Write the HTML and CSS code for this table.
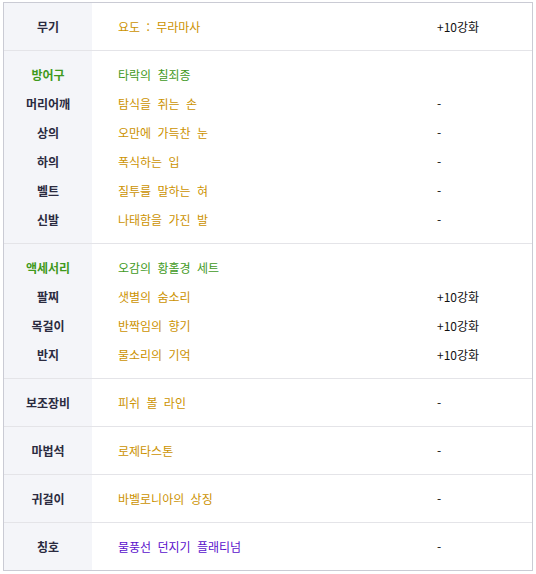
FILE: index.html
```html
<!DOCTYPE html>
<html lang="ko">
<head>
<meta charset="utf-8">
<link rel="stylesheet" href="styles.css">
</head>
<body>
<div class="equip">
  <div class="group">
    <div class="label"><div>무기</div></div>
    <div class="value"><div class="gold">요도 : 무라마사</div></div>
    <div class="extra"><div>+10강화</div></div>
  </div>
  <div class="group">
    <div class="label">
      <div class="green">방어구</div>
      <div>머리어깨</div>
      <div>상의</div>
      <div>하의</div>
      <div>벨트</div>
      <div>신발</div>
    </div>
    <div class="value">
      <div class="green">타락의 칠죄종</div>
      <div class="gold">탐식을 쥐는 손</div>
      <div class="gold">오만에 가득찬 눈</div>
      <div class="gold">폭식하는 입</div>
      <div class="gold">질투를 말하는 혀</div>
      <div class="gold">나태함을 가진 발</div>
    </div>
    <div class="extra">
      <div>&nbsp;</div>
      <div>-</div>
      <div>-</div>
      <div>-</div>
      <div>-</div>
      <div>-</div>
    </div>
  </div>
  <div class="group">
    <div class="label">
      <div class="green">액세서리</div>
      <div>팔찌</div>
      <div>목걸이</div>
      <div>반지</div>
    </div>
    <div class="value">
      <div class="green">오감의 황홀경 세트</div>
      <div class="gold">샛별의 숨소리</div>
      <div class="gold">반짝임의 향기</div>
      <div class="gold">물소리의 기억</div>
    </div>
    <div class="extra">
      <div>&nbsp;</div>
      <div>+10강화</div>
      <div>+10강화</div>
      <div>+10강화</div>
    </div>
  </div>
  <div class="group">
    <div class="label"><div>보조장비</div></div>
    <div class="value"><div class="gold">피쉬 볼 라인</div></div>
    <div class="extra"><div>-</div></div>
  </div>
  <div class="group">
    <div class="label"><div>마법석</div></div>
    <div class="value"><div class="gold">로제타스톤</div></div>
    <div class="extra"><div>-</div></div>
  </div>
  <div class="group">
    <div class="label"><div>귀걸이</div></div>
    <div class="value"><div class="gold">바벨로니아의 상징</div></div>
    <div class="extra"><div>-</div></div>
  </div>
  <div class="group">
    <div class="label"><div>칭호</div></div>
    <div class="value"><div class="purple">물풍선 던지기 플래티넘</div></div>
    <div class="extra"><div>-</div></div>
  </div>
</div>
</body>
</html>
```
FILE: styles.css
```css
html, body {
  margin: 0;
  padding: 0;
  background: #ffffff;
}
body {
  padding: 2px 3px 0 3px;
  font-family: "Noto Sans CJK KR", "Noto Sans", sans-serif;
  font-size: 12px;
  color: #111111;
}
.equip {
  width: 530px;
  box-sizing: border-box;
  border: 1px solid #cacbd4;
}
.group {
  display: grid;
  grid-template-columns: 88px 345px 1fr;
  border-top: 1px solid #e4e4e8;
}
.group:first-child {
  border-top: none;
}
.group > div {
  padding: 9px 0;
}
.group > div > div {
  height: 29px;
  line-height: 29px;
  white-space: nowrap;
  word-spacing: 3px;
}
.label {
  background: #f4f5f9;
  text-align: center;
  font-weight: bold;
  color: #2b2b40;
}
.value {
  padding-left: 26px !important;
}
.extra {
  color: #111111;
}
.gold { color: #cc9200; }
.green { color: #3f9a1c; }
.purple { color: #5a10cc; }
```
